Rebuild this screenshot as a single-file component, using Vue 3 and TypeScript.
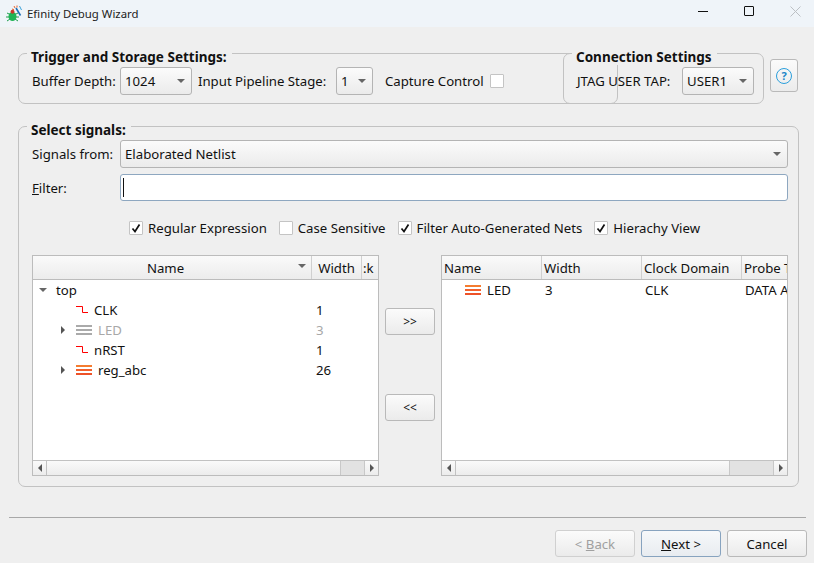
<script setup lang="ts">
type Signal = {
  name: string;
  width: string;
  kind: "clock" | "bus";
  expandable?: boolean;
  muted?: boolean;
};

const leftSignals: Signal[] = [
  { name: "CLK", width: "1", kind: "clock" },
  { name: "LED", width: "3", kind: "bus", expandable: true, muted: true },
  { name: "nRST", width: "1", kind: "clock" },
  { name: "reg_abc", width: "26", kind: "bus", expandable: true }
];

const filterOptions = [
  { label: "Regular Expression", checked: true },
  { label: "Case Sensitive", checked: false },
  { label: "Filter Auto-Generated Nets", checked: true },
  { label: "Hierachy View", checked: true }
];

const rightColumns = ["Name", "Width", "Clock Domain", "Probe Type"];
</script>

<template>
  <div class="window">
    <header class="titlebar">
      <svg class="logo" width="18" height="17" viewBox="0 0 18 17">
        <path d="M11 3 L15.5 10.5" stroke="#1c6fb8" stroke-width="1.6" />
        <path d="M14.5 1 L16.5 5" stroke="#39a0d8" stroke-width="1" />
        <path d="M9 1 l1 2 M12 0.5 v2 M7 4 l2 0.6" stroke="#e8632c" stroke-width="1" />
        <path d="M2 8 L5 9.5 M1 12 H5 M2 16 L5 14 M13 8 L10 9.5 M14 12 H10 M13 16 L10 14" stroke="#1f9e4d" stroke-width="1" />
        <ellipse cx="7.5" cy="11.5" rx="4" ry="4.5" fill="#1fb455" />
        <circle cx="7.5" cy="6.8" r="2" fill="#c9382b" />
      </svg>
      <span class="title-text">Efinity Debug Wizard</span>
      <div class="window-controls">
        <span class="ctl"><i class="min"></i></span>
        <span class="ctl"><i class="max"></i></span>
        <span class="ctl">
          <svg width="11" height="11" viewBox="0 0 11 11"><path d="M0.5 0.5 L10.5 10.5 M10.5 0.5 L0.5 10.5" stroke="#bcc0c4" stroke-width="1" /></svg>
        </span>
      </div>
    </header>

    <main class="content">
      <div class="top-row">
        <section class="group trigger-group">
          <h3 class="legend">Trigger and Storage Settings:</h3>
          <div class="inline-row">
            <label class="lbl lbl-buffer">Buffer Depth:</label>
            <div class="combo combo-buffer"><span>1024</span><i class="caret"></i></div>
            <label class="lbl lbl-pipe">Input Pipeline Stage:</label>
            <div class="combo combo-pipe"><span>1</span><i class="caret"></i></div>
            <label class="lbl lbl-capture">Capture Control</label>
            <span class="check"></span>
          </div>
        </section>

        <section class="group conn-group">
          <h3 class="legend">Connection Settings</h3>
          <div class="inline-row">
            <label class="lbl lbl-jtag">JTAG USER TAP:</label>
            <div class="combo combo-user"><span>USER1</span><i class="caret"></i></div>
          </div>
        </section>

        <button class="btn help-btn"><span class="help-icon">?</span></button>
      </div>

      <section class="group signals-group">
        <h3 class="legend">Select signals:</h3>

        <div class="field-row">
          <label class="lbl field-lbl">Signals from:</label>
          <div class="combo combo-wide"><span>Elaborated Netlist</span><i class="caret"></i></div>
        </div>
        <div class="field-row filter-row">
          <label class="lbl field-lbl"><u>F</u>ilter:</label>
          <div class="text-input"><i class="cursor"></i></div>
        </div>

        <div class="options">
          <label v-for="opt in filterOptions" :key="opt.label" class="option">
            <span class="check">
              <svg v-if="opt.checked" width="12" height="12" viewBox="0 0 12 12"><path d="M2.5 6.5 L5 9.5 L9.5 2.5" fill="none" stroke="#111" stroke-width="1.7" /></svg>
            </span>
            <span class="lbl">{{ opt.label }}</span>
          </label>
        </div>

        <div class="tables">
          <div class="table">
            <div class="thead left-cols">
              <div class="th th-name">Name<i class="caret sort"></i></div>
              <div class="th th-center">Width</div>
              <div class="th th-last">:k</div>
            </div>
            <div class="tbody">
              <div class="tree-row root-row">
                <i class="caret tree-caret"></i>
                <span class="cell-text">top</span>
              </div>
              <div v-for="sig in leftSignals" :key="sig.name" class="tree-row left-cols" :class="{ muted: sig.muted }">
                <div class="name-cell">
                  <span class="expander"><i v-if="sig.expandable" class="arrow-right"></i></span>
                  <svg v-if="sig.kind === 'clock'" class="clock-icon" width="12" height="8" viewBox="0 0 12 8"><path d="M0 0.5 H6.5 V6.5 H12" fill="none" stroke="#ff0000" stroke-width="1" /></svg>
                  <span v-else class="bus-icon"></span>
                  <span class="cell-text">{{ sig.name }}</span>
                </div>
                <div class="width-cell">{{ sig.width }}</div>
              </div>
            </div>
            <div class="scrollbar">
              <span class="sb-btn"><i class="sb-left"></i></span>
              <span class="sb-track left-track"></span>
              <span class="sb-thumb left-thumb"></span>
              <span class="sb-btn"><i class="sb-right"></i></span>
            </div>
          </div>

          <div class="move-col">
            <button class="btn move-btn">&gt;&gt;</button>
            <button class="btn move-btn">&lt;&lt;</button>
          </div>

          <div class="table">
            <div class="thead right-cols">
              <div v-for="col in rightColumns" :key="col" class="th th-plain">{{ col }}</div>
            </div>
            <div class="tbody">
              <div class="tree-row right-cols">
                <div class="right-name"><span class="bus-icon"></span><span class="cell-text">LED</span></div>
                <div class="right-cell">3</div>
                <div class="right-cell">CLK</div>
                <div class="right-cell">DATA AND TRIGGER</div>
              </div>
            </div>
            <div class="scrollbar">
              <span class="sb-btn"><i class="sb-left"></i></span>
              <span class="sb-track right-track"></span>
              <span class="sb-thumb right-thumb"></span>
              <span class="sb-btn"><i class="sb-right"></i></span>
            </div>
          </div>
        </div>
      </section>
    </main>

    <hr class="separator" />

    <footer class="footer">
      <button class="btn foot-btn" disabled>&lt; <u>B</u>ack</button>
      <button class="btn foot-btn default-btn"><u>N</u>ext &gt;</button>
      <button class="btn foot-btn">Cancel</button>
    </footer>
  </div>
</template>

<style>
html,
body {
  margin: 0;
  background: #efefef;
}
</style>

<style scoped>
.window {
  width: 814px;
  height: 563px;
  overflow: hidden;
  background: #efefef;
  color: #111;
  font-family: "Noto Sans", sans-serif;
  font-size: 13.2px;
  line-height: 18px;
}

.titlebar {
  height: 27px;
  display: flex;
  align-items: center;
  background: #eff4f9;
  padding-left: 5px;
}

.logo {
  margin-right: 4px;
}

.title-text {
  font-size: 11.4px;
  color: #222;
}

.window-controls {
  margin-left: auto;
  margin-right: -4px;
  display: flex;
  margin-top: -5px;
}

.ctl {
  width: 46px;
  display: flex;
  justify-content: center;
}

.min {
  width: 10px;
  height: 1px;
  background: #111;
  margin-top: 5px;
}

.max {
  width: 8px;
  height: 8px;
  border: 1px solid #111;
  border-radius: 1px;
}

.content {
  padding: 26px 15px 0 18px;
}

.top-row {
  display: flex;
  align-items: flex-start;
}

.group {
  position: relative;
  box-sizing: border-box;
  border: 1px solid #c2c2c2;
  border-radius: 7px;
}

.legend {
  position: absolute;
  margin: 0;
  top: -4px;
  left: 8px;
  padding: 0 5px 0 4px;
  background: #efefef;
  font-size: 13.5px;
  font-weight: 700;
  line-height: 15px;
  white-space: nowrap;
}

.trigger-group {
  width: 600px;
  height: 51px;
}

.conn-group {
  width: 201px;
  height: 51px;
  margin-left: -55px;
}

.inline-row {
  display: flex;
  align-items: center;
  height: 28px;
  margin-top: 13px;
}

.lbl {
  white-space: nowrap;
}

.lbl-buffer {
  margin-left: 13px;
  width: 88px;
}

.lbl-pipe {
  margin-left: 6px;
  width: 138px;
}

.lbl-capture {
  margin-left: 12px;
  width: 105px;
}

.lbl-jtag {
  margin-left: 13px;
  width: 105px;
}

.combo {
  position: relative;
  box-sizing: border-box;
  height: 28px;
  display: flex;
  align-items: center;
  padding-left: 4px;
  border: 1px solid #b4b4b4;
  border-radius: 3px;
  background: linear-gradient(#fbfbfb, #ebebeb);
}

.combo-buffer {
  width: 72px;
}

.combo-pipe {
  width: 37px;
}

.combo-user {
  width: 72px;
}

.combo-wide {
  flex: 1;
}

.caret {
  width: 0;
  height: 0;
  border-left: 4px solid transparent;
  border-right: 4px solid transparent;
  border-top: 4px solid #666;
}

.combo .caret {
  position: absolute;
  right: 6px;
  top: 11px;
}

.check {
  box-sizing: border-box;
  width: 14px;
  height: 14px;
  display: inline-flex;
  align-items: center;
  justify-content: center;
  background: #fff;
  border: 1px solid #c4c4c4;
  border-radius: 1px;
}

.btn {
  box-sizing: border-box;
  padding: 0;
  font: inherit;
  color: #111;
  border: 1px solid #b9b9b9;
  border-radius: 3px;
  background: linear-gradient(#fbfbfb, #ebebeb);
}

.help-btn {
  width: 28px;
  height: 33px;
  margin: 6px 0 0 6px;
  display: flex;
  align-items: center;
  justify-content: center;
}

.help-icon {
  box-sizing: border-box;
  width: 16px;
  height: 16px;
  border: 1.5px solid #2b9fdc;
  border-radius: 50%;
  color: #1c86c8;
  font-size: 11px;
  font-weight: 700;
  line-height: 13px;
  text-align: center;
}

.signals-group {
  height: 361px;
  margin-top: 22px;
  padding: 13px 10px 0 13px;
}

.field-row {
  display: flex;
  align-items: center;
  height: 28px;
}

.filter-row {
  height: 27px;
  margin-top: 6px;
}

.field-lbl {
  width: 88px;
}

.text-input {
  flex: 1;
  box-sizing: border-box;
  height: 27px;
  display: flex;
  align-items: center;
  padding-left: 2px;
  background: #fff;
  border: 1px solid #8ea7c0;
  border-radius: 3px;
}

.cursor {
  width: 1px;
  height: 19px;
  background: #111;
}

.options {
  height: 20px;
  margin-top: 17px;
  display: flex;
  align-items: center;
  padding-left: 97px;
}

.option {
  display: flex;
  align-items: center;
  gap: 5px;
  margin-right: 12px;
}

.tables {
  display: flex;
  margin-top: 17px;
}

.table {
  box-sizing: border-box;
  width: 347px;
  height: 221px;
  display: flex;
  flex-direction: column;
  background: #fff;
  border: 1px solid #bcbcbc;
  overflow: hidden;
}

.thead {
  height: 23px;
  flex: none;
  border-bottom: 1px solid #bcbcbc;
  background: linear-gradient(#fafafa, #ececec);
}

.left-cols {
  display: grid;
  grid-template-columns: 279px 50px 17px;
}

.right-cols {
  display: grid;
  grid-template-columns: 100px 100px 100px 100px;
}

.th {
  position: relative;
  box-sizing: border-box;
  height: 23px;
  line-height: 24px;
  white-space: nowrap;
  overflow: hidden;
  border-right: 1px solid #d0d0d0;
}

.th-name {
  text-align: center;
  padding-right: 13px;
}

.th-center {
  text-align: center;
}

.th-last {
  padding-left: 1px;
  border-right: none;
}

.th-plain {
  padding-left: 2px;
}

.sort {
  position: absolute;
  right: 5px;
  top: 8px;
}

.tbody {
  flex: 1;
}

.tree-row {
  height: 20px;
  line-height: 20px;
  white-space: nowrap;
}

.root-row {
  display: flex;
  align-items: center;
  padding-left: 6px;
}

.tree-caret {
  margin-right: 9px;
}

.muted {
  color: #a8a8a8;
}

.muted .bus-icon {
  background: linear-gradient(#aaa 0 2px, transparent 2px 4px, #aaa 4px 6px, transparent 6px 8px, #aaa 8px 10px);
}

.name-cell {
  display: flex;
  align-items: center;
  padding-left: 28px;
}

.expander {
  width: 15px;
  flex: none;
}

.arrow-right {
  display: block;
  width: 0;
  height: 0;
  border-top: 4px solid transparent;
  border-bottom: 4px solid transparent;
  border-left: 4px solid #555;
}

.clock-icon {
  margin-right: 6px;
  flex: none;
}

.bus-icon {
  width: 16px;
  height: 10px;
  margin-right: 6px;
  flex: none;
  background: linear-gradient(#f47c30 0 2px, transparent 2px 4px, #f2602c 4px 6px, transparent 6px 8px, #ee5228 8px 10px);
}

.width-cell {
  padding-left: 4px;
}

.right-name {
  display: flex;
  align-items: center;
  padding-left: 23px;
}

.right-cell {
  padding-left: 3px;
  overflow: hidden;
}

.right-cols .right-cell:last-child {
  width: 44px;
}

.scrollbar {
  height: 14px;
  flex: none;
  display: flex;
  border-top: 1px solid #c2c2c2;
  background: linear-gradient(#fafafa, #ececec);
}

.sb-btn {
  width: 13px;
  flex: none;
  display: flex;
  align-items: center;
  justify-content: center;
}

.sb-left {
  width: 0;
  height: 0;
  border-top: 4px solid transparent;
  border-bottom: 4px solid transparent;
  border-right: 4px solid #555;
}

.sb-right {
  width: 0;
  height: 0;
  border-top: 4px solid transparent;
  border-bottom: 4px solid transparent;
  border-left: 4px solid #555;
}

.sb-track {
  border-left: 1px solid #c2c2c2;
}

.left-track {
  width: 293px;
}

.right-track {
  width: 273px;
}

.sb-thumb {
  box-sizing: border-box;
  background: #e2e2e2;
  border-left: 1px solid #c8c8c8;
  border-right: 1px solid #c8c8c8;
}

.left-thumb {
  width: 25px;
}

.right-thumb {
  width: 45px;
}

.move-col {
  width: 62px;
  flex: none;
  display: flex;
  flex-direction: column;
  align-items: center;
  gap: 59px;
  padding-top: 53px;
}

.move-btn {
  width: 50px;
  height: 27px;
  font-size: 12px;
}

.separator {
  margin: 30px 8px 0 9px;
  height: 1px;
  border: none;
  background: #a8a8a8;
}

.footer {
  display: flex;
  justify-content: flex-end;
  gap: 6px;
  padding: 12px 7px 0 0;
}

.foot-btn {
  width: 80px;
  height: 27px;
}

.foot-btn:disabled {
  color: #a0a0a0;
  border-color: #d0d0d0;
}

.default-btn {
  border-color: #87a3bf;
  background: linear-gradient(#f6f8fa, #e8ecf0);
}
</style>
